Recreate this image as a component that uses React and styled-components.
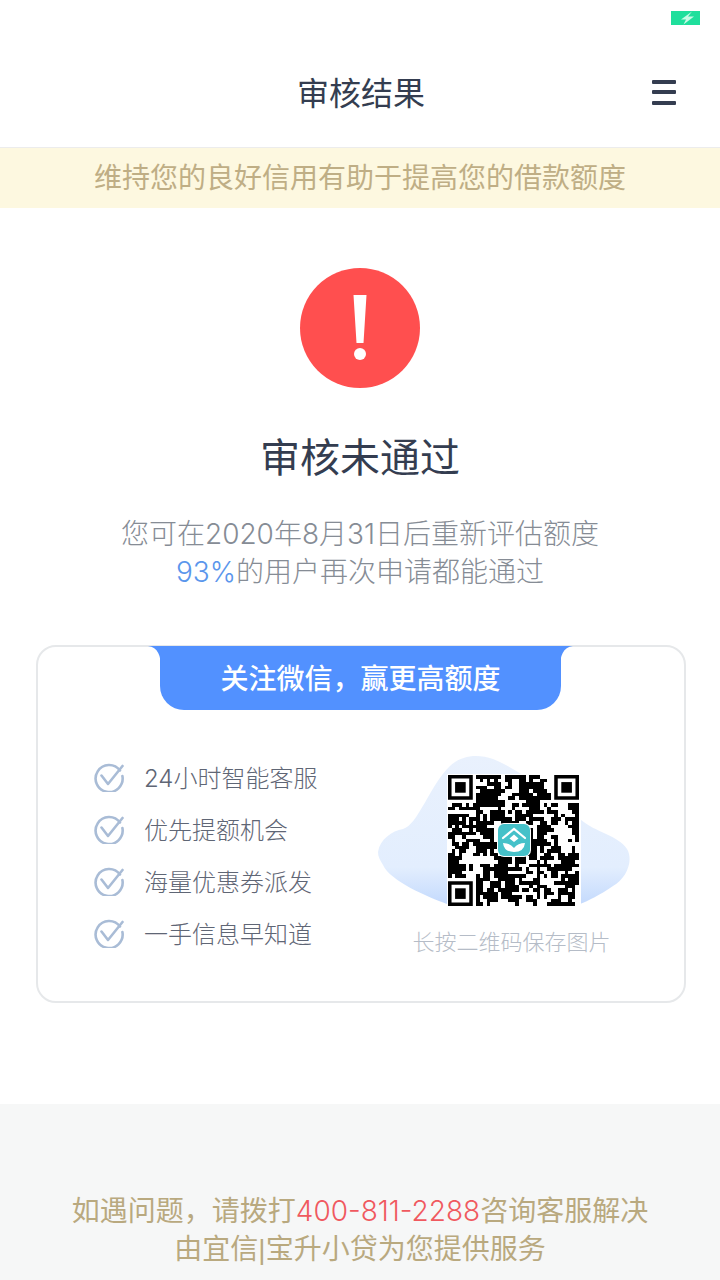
import React from 'react'
import styled, { createGlobalStyle } from 'styled-components'

const GlobalStyle = createGlobalStyle`
  html, body {
    margin: 0;
    padding: 0;
    background: #fff;
  }
  body {
    font-family: Inter, "Noto Sans CJK SC", "Liberation Sans", sans-serif;
    font-weight: 300;
  }
`

/*
|--------------------------------------------------------------------------
| Header
|--------------------------------------------------------------------------
*/

const Page = styled.div`
  width: 720px;
  height: 1280px;
  overflow: hidden;
  display: flex;
  flex-direction: column;
`

const StatusBar = styled.div`
  height: 40px;
  display: flex;
  justify-content: flex-end;
  align-items: flex-start;
  padding: 11px 20px 0 0;
  box-sizing: border-box;
`

const NavBar = styled.div`
  height: 108px;
  box-sizing: border-box;
  border-bottom: 1px solid #ececec;
  display: flex;
  justify-content: space-between;
  align-items: center;
  padding: 0 44px 3px 297px;
`

const NavTitle = styled.div`
  font-size: 32px;
  line-height: 46px;
  color: #343d50;
  font-weight: 400;
  margin-top: 3px;
`

const Notice = styled.div`
  height: 60px;
  background: #fdf8e0;
  color: #bfae85;
  font-size: 28px;
  line-height: 60px;
  text-align: center;
  font-weight: 400;
`

const Battery = () => (
  <svg width="29" height="14" viewBox="0 0 29 14">
    <rect width="29" height="14" fill="#1fdf9c" />
    <path d="M21 0.5 L10 8.5 L15 8.5 L12.5 13.5 L23 5.5 L17 5.5 Z" fill="#c9fae6" />
  </svg>
)

const Menu = () => (
  <svg width="24" height="25" viewBox="0 0 24 25">
    <rect y="0" width="24" height="4" rx="1" fill="#343d50" />
    <rect y="10" width="24" height="4" rx="1" fill="#343d50" />
    <rect y="21" width="24" height="4" rx="1" fill="#343d50" />
  </svg>
)

/*
|--------------------------------------------------------------------------
| Result
|--------------------------------------------------------------------------
*/

const Result = styled.div`
  display: flex;
  flex-direction: column;
  align-items: center;
  padding-top: 60px;
`

const ResultTitle = styled.div`
  margin-top: 41px;
  font-size: 40px;
  line-height: 58px;
  color: #343d50;
  font-weight: 400;
`

const ResultText = styled.div`
  margin-top: 28px;
  font-size: 28px;
  line-height: 38px;
  color: #868c95;
  text-align: center;
`

const Percent = styled.span`
  color: #5a96ec;
`

const AlertIcon = () => (
  <svg width="120" height="120" viewBox="0 0 120 120">
    <circle cx="60" cy="60" r="60" fill="#ff4f4f" />
    <path d="M53.5 27 H66.5 L63.5 75 H56.5 Z" fill="#fff" />
    <circle cx="60" cy="86" r="6" fill="#fff" />
  </svg>
)

/*
|--------------------------------------------------------------------------
| WeChat card
|--------------------------------------------------------------------------
*/

const Card = styled.div`
  margin: 54px 34px 0 36px;
  height: 358px;
  box-sizing: border-box;
  border: 2px solid #e6e8ea;
  border-radius: 20px;
  display: flex;
  flex-direction: column;
`

const CardTab = styled.div`
  align-self: center;
  margin-top: -1px;
  margin-left: -1px;
  width: 401px;
  height: 64px;
  background: #5291ff;
  border-radius: 0 0 24px 24px;
  color: #fff;
  font-size: 28px;
  line-height: 66px;
  font-weight: 500;
  text-align: center;
  position: relative;
`

const TabEar = styled.svg`
  position: absolute;
  top: 0;
  width: 13px;
  height: 22px;
  ${({ side }) => (side === 'left' ? 'left: -12px;' : 'right: -12px; transform: scaleX(-1);')}
`

const CardBody = styled.div`
  display: flex;
  padding: 23px 0 0 56px;
`

const FeatureList = styled.div`
  width: 284px;
  padding-top: 27px;
  display: flex;
  flex-direction: column;
  gap: 18px;
`

const Feature = styled.div`
  display: flex;
  align-items: center;
  gap: 20px;
  height: 34px;
  font-size: 24px;
  color: #5f6675;
`

const FeatureLabel = styled.span`
  margin-top: -2px;
`

const QrColumn = styled.div`
  display: flex;
  flex-direction: column;
  align-items: center;
  width: 254px;
  margin-top: 22px;
`

const QrStage = styled.div`
  position: relative;
  width: 254px;
  height: 152px;
  display: flex;
  justify-content: center;
  align-items: flex-end;
`

const Blob = styled.svg`
  position: absolute;
  left: 0;
  top: 0;
`

const QrBox = styled.div`
  position: relative;
  width: 134px;
  height: 132px;
  background: #fff;
  display: flex;
  justify-content: center;
  align-items: center;
  margin-left: 17px;
  margin-bottom: 1px;
`

const QrCaption = styled.div`
  margin-top: 19px;
  margin-left: 13px;
  font-size: 22px;
  line-height: 32px;
  color: #b5bcc7;
`

const QrMatrix = styled.svg`
  filter: blur(0.45px);
`

const CheckIcon = () => (
  <svg width="30" height="30" viewBox="0 0 30 30" fill="none" stroke="#a9bcd6" strokeWidth="2.6">
    <path d="M26 8.5 A13.5 13.5 0 1 0 28.4 14" strokeLinecap="round" />
    <path d="M7.5 13.5 L14 22 L28.5 4" strokeLinecap="round" strokeLinejoin="round" />
  </svg>
)

// seeded noise so the code stays the same on every render
const QR_SIZE = 37

const buildQrPath = () => {
  let seed = 20200831
  const next = (n) => {
    seed = (seed * 1103515245 + 12345) & 0x7fffffff
    return (seed >> 12) % n
  }
  const inFinder = (x, y) =>
    (x < 8 && y < 8) || (x >= QR_SIZE - 8 && y < 8) || (x < 8 && y >= QR_SIZE - 8)
  const rows = []
  let d = ''
  for (let y = 0; y < QR_SIZE; y++) {
    rows[y] = []
    for (let x = 0; x < QR_SIZE; x++) {
      const roll = next(10)
      let on = next(100) < 60
      // clump with the neighbours, the real code reads as chunky blocks
      if (roll < 2 && x > 0) on = rows[y][x - 1]
      else if (roll < 4 && y > 0) on = rows[y - 1][x]
      rows[y][x] = on
      if (on && !inFinder(x, y)) d += `M${x} ${y}h1v1h-1z`
    }
  }
  return d
}

const Finder = ({ x, y }) => (
  <>
    <path d={`M${x} ${y}h7v7h-7z M${x + 1} ${y + 1}v5h5v-5z`} fill="#000" fillRule="evenodd" />
    <rect x={x + 2} y={y + 2} width="3" height="3" fill="#000" />
  </>
)

const QrCode = () => (
  <QrMatrix width="131" height="131" viewBox={`0 0 ${QR_SIZE} ${QR_SIZE}`}>
    <path d={buildQrPath()} fill="#000" shapeRendering="crispEdges" />
    <Finder x={0} y={0} />
    <Finder x={QR_SIZE - 7} y={0} />
    <Finder x={0} y={QR_SIZE - 7} />
  </QrMatrix>
)

const QrLogo = styled.svg`
  position: absolute;
  left: 50%;
  top: 50%;
  transform: translate(-50%, -50%);
`

const Logo = () => (
  <QrLogo width="34" height="34" viewBox="0 0 34 34">
    <rect x="0" y="0" width="34" height="34" rx="7" fill="#fff" />
    <rect x="1" y="1" width="32" height="32" rx="6" fill="#45c1c9" />
    <path d="M6 15 L17 6 L28 15" fill="none" stroke="#fff" strokeWidth="2.2" strokeLinecap="round" />
    <path d="M12.5 15.5 L17 11.5 L21.5 15.5 L17 19 Z" fill="#fff" />
    <path d="M6 20 Q13 20 17 25 Q21 20 28 20 Q27 29 17 29 Q7 29 6 20 Z" fill="#fff" />
  </QrLogo>
)

/*
|--------------------------------------------------------------------------
| Footer
|--------------------------------------------------------------------------
*/

const Footer = styled.div`
  margin-top: 101px;
  flex: 1;
  background: #f6f7f7;
  padding-top: 88px;
  color: #b9a97f;
  font-size: 28px;
  line-height: 38px;
  text-align: center;
  font-weight: 400;
`

const Phone = styled.span`
  color: #f0595f;
  font-weight: 300;
`

const Pipe = styled.span`
  font-family: "Liberation Sans", sans-serif;
`

const features = ['24小时智能客服', '优先提额机会', '海量优惠券派发', '一手信息早知道']

const App = () => {
  return (
    <Page>
      <GlobalStyle />
      <StatusBar>
        <Battery />
      </StatusBar>
      <NavBar>
        <NavTitle>审核结果</NavTitle>
        <Menu />
      </NavBar>
      <Notice>维持您的良好信用有助于提高您的借款额度</Notice>
      <Result>
        <AlertIcon />
        <ResultTitle>审核未通过</ResultTitle>
        <ResultText>
          您可在2020年8月31日后重新评估额度
          <br />
          <Percent>93%</Percent>的用户再次申请都能通过
        </ResultText>
      </Result>
      <Card>
        <CardTab>
          <TabEar side="left" viewBox="0 0 13 22">
            <path d="M0 0 H13 V22 C13 10 10 1 0 0 Z" fill="#5291ff" />
          </TabEar>
          <TabEar side="right" viewBox="0 0 13 22">
            <path d="M0 0 H13 V22 C13 10 10 1 0 0 Z" fill="#5291ff" />
          </TabEar>
          关注微信，赢更高额度
        </CardTab>
        <CardBody>
          <FeatureList>
            {features.map((label) => (
              <Feature key={label}>
                <CheckIcon />
                <FeatureLabel>{label}</FeatureLabel>
              </Feature>
            ))}
          </FeatureList>
          <QrColumn>
            <QrStage>
              <Blob width="254" height="152" viewBox="0 0 254 152">
                <defs>
                  <linearGradient id="blobFill" x1="0" y1="0" x2="0" y2="1">
                    <stop offset="0" stopColor="#e9f1fd" />
                    <stop offset="0.75" stopColor="#e3eefe" />
                    <stop offset="1" stopColor="#c4dafd" />
                  </linearGradient>
                </defs>
                <path
                  d="M0 97 C2 84 14 76 25 74 C40 70 52 30 72 11 C84 0 100 -1 115 4 C140 14 175 40 202 64 C218 78 240 80 249 94 C256 106 248 124 235 131 C222 140 210 146 202 149 L69 149 C50 142 12 126 5 110 C2 105 0 102 0 97 Z"
                  fill="url(#blobFill)"
                />
              </Blob>
              <QrBox>
                <QrCode />
                <Logo />
              </QrBox>
            </QrStage>
            <QrCaption>长按二维码保存图片</QrCaption>
          </QrColumn>
        </CardBody>
      </Card>
      <Footer>
        如遇问题，请拨打<Phone>400-811-2288</Phone>咨询客服解决
        <br />
        由宜信<Pipe>|</Pipe>宝升小贷为您提供服务
      </Footer>
    </Page>
  )
}

export default App
